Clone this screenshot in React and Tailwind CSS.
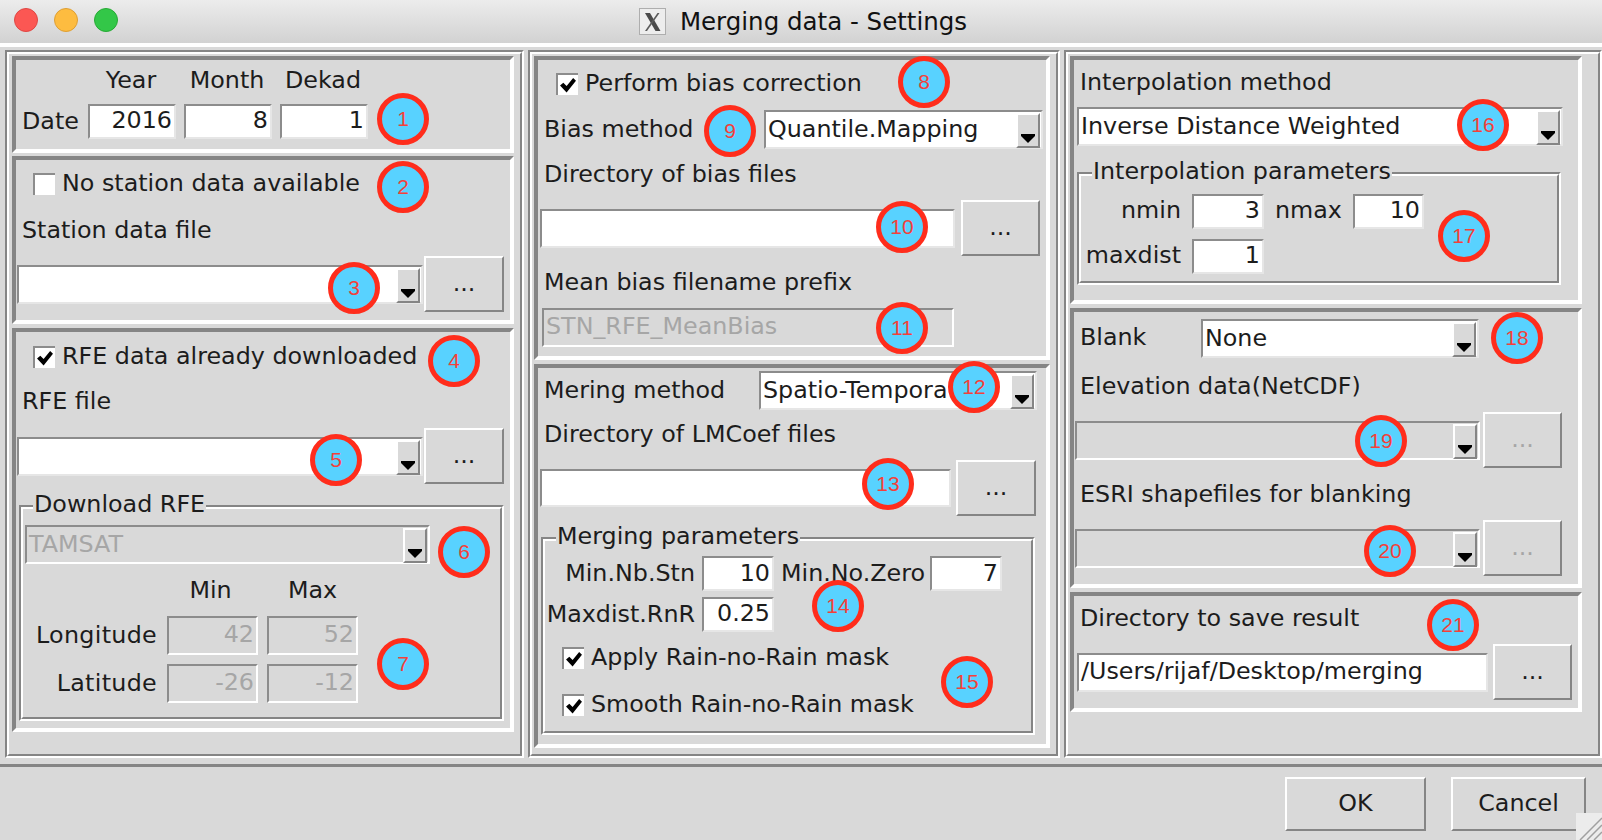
import React from 'react';

const sunken = 'border-t-[#858585] border-l-[#858585] border-r-white border-b-white';
const raised = 'border-t-white border-l-white border-r-[#858585] border-b-[#858585]';

const badges = [
  [1, 403, 119], [2, 403, 187], [3, 354, 288], [4, 454, 361], [5, 336, 460], [6, 464, 552], [7, 403, 664],
  [8, 924, 82], [9, 730, 131], [10, 902, 227], [11, 902, 328], [12, 974, 387], [13, 888, 484], [14, 838, 606],
  [15, 967, 682], [16, 1483, 125], [17, 1464, 236], [18, 1517, 338], [19, 1381, 441], [20, 1390, 551], [21, 1453, 625],
];

const Label = ({ className = '', children }) => (
  <div className={`h-[30px] leading-[32px] whitespace-nowrap shrink-0 ${className}`}>{children}</div>
);

const Entry = ({ w, h = 35, value, disabled, left, className = '' }) => (
  <div
    style={{ width: w, height: h }}
    className={`shrink-0 border-2 border-t-[#8c8c8c] border-l-[#8c8c8c] flex items-center px-[2px] pb-[1px] whitespace-nowrap overflow-hidden ${left ? 'justify-start' : 'justify-end'} ${disabled ? 'bg-[#d9d9d9] text-[#a6a6a6] border-r-white border-b-white' : 'bg-white border-r-[#e6e6e6] border-b-[#e6e6e6]'} ${className}`}
  >
    {value}
  </div>
);

const Arrow = () => (
  <svg width="14" height="9" viewBox="0 0 14 9">
    <path d="M0 0H14V2L7 9L0 2Z" fill="#000" />
  </svg>
);

const Combo = ({ w, value, disabled, className = '' }) => (
  <div
    style={{ width: w }}
    className={`h-[39px] shrink-0 border-2 border-t-[#8c8c8c] border-l-[#8c8c8c] flex ${disabled ? 'bg-[#d9d9d9] border-r-white border-b-white text-[#a6a6a6]' : 'bg-white border-r-[#e6e6e6] border-b-[#e6e6e6]'} ${className}`}
  >
    <div className="flex-1 px-[2px] leading-[35px] whitespace-nowrap overflow-hidden">{value}</div>
    <div className={`w-[24px] h-[35px] mt-[1px] mr-[1px] border-2 bg-[#d9d9d9] flex items-end justify-center pb-[3px] ${raised}`}>
      <Arrow />
    </div>
  </div>
);

const Btn = ({ w = 80, h = 56, disabled, children, className = '' }) => (
  <div
    style={{ width: w, height: h }}
    className={`shrink-0 border-2 flex items-center justify-center ${raised} ${disabled ? 'text-[#a6a6a6]' : ''} ${className}`}
  >
    {children}
  </div>
);

const Check = ({ checked, label, className = '' }) => (
  <div className={`flex items-center gap-[7px] h-[22px] whitespace-nowrap ${className}`}>
    <div className="w-[22px] h-[22px] shrink-0 bg-white border-t-2 border-l-2 border-[#8c8c8c] flex items-center justify-center">
      {checked && (
        <svg width="16" height="15" viewBox="0 0 17 16">
          <path d="M0 8L3.5 5L7 8.5L14 0L17 3L7 15.5Z" fill="#000" />
        </svg>
      )}
    </div>
    <span className="-mt-[1px]">{label}</span>
  </div>
);

const Group = ({ h, className = '', children }) => (
  <div style={{ height: h }} className={`shrink-0 border-4 ${sunken} ${className}`}>
    {children}
  </div>
);

const Frame = ({ w, h, title, titleLeft = 12, className = '', children }) => (
  <div style={{ width: w, height: h }} className={`relative border-2 ${sunken} ${className}`}>
    <div className={`h-full border-2 ${raised}`}>{children}</div>
    <div style={{ left: titleLeft }} className="absolute -top-[18px] h-[30px] leading-[30px] px-[1px] bg-[#d9d9d9] whitespace-nowrap">
      {title}
    </div>
  </div>
);

const Column = ({ w, pl, children }) => (
  <div style={{ width: w }} className={`h-[708px] shrink-0 border-2 ${sunken}`}>
    <div style={{ paddingLeft: pl }} className={`h-full border-2 pt-[2px] flex flex-col ${raised}`}>
      {children}
    </div>
  </div>
);

const TitleIcon = () => (
  <svg width="27" height="27" viewBox="0 0 27 27">
    <rect x="0.5" y="0.5" width="26" height="26" fill="#ededed" stroke="#aeaeae" />
    <path d="M6 5H11L21.5 23H16.5Z" fill="#4a4a4a" />
    <path d="M18.5 5H20.5L8 23H6Z" fill="#5a5a5a" />
  </svg>
);

const App = () => (
  <div className="relative w-[1602px] h-[840px] overflow-hidden bg-[#d9d9d9] text-[#1c1c1c] text-[23.8px] font-['DejaVu_Sans',sans-serif]">
    {/* title bar */}
    <div className="relative h-[43px] bg-gradient-to-b from-[#ececec] to-[#d2d2d2] flex items-center justify-center">
      <div className="absolute left-[14px] top-[8px] flex gap-[16px]">
        <div className="w-[24px] h-[24px] rounded-full bg-[#fc5753] border border-[#df4744]" />
        <div className="w-[24px] h-[24px] rounded-full bg-[#fdbc40] border border-[#de9f34]" />
        <div className="w-[24px] h-[24px] rounded-full bg-[#33c748] border border-[#27aa35]" />
      </div>
      <div className="ml-[4px] flex items-center gap-[14px] text-[24.5px] text-[#111]">
        <TitleIcon />
        <span className="mt-[1px]">Merging data - Settings</span>
      </div>
    </div>

    {/* main area */}
    <div className="h-[724px] border-t-4 border-t-white border-b-[3px] border-b-[#858585] pt-[3px] pl-[5px] flex gap-[4px]">
      <Column w={519} pl={3}>
        <Group h={97} className="w-[502px]">
          <div className="pt-[4px] grid grid-cols-[64px_88px_88px_88px] gap-x-2 gap-y-[10px]">
            <div />
            <Label className="text-center -ml-[2px]">Year</Label>
            <Label className="text-center -ml-[2px]">Month</Label>
            <Label className="text-center -ml-[2px]">Dekad</Label>
            <div className="pl-[6px] leading-[34px] whitespace-nowrap">Date</div>
            <Entry w={88} value="2016" />
            <Entry w={88} value="8" />
            <Entry w={88} value="1" />
          </div>
        </Group>
        <Group h={168} className="w-[502px] mt-[3px]">
          <Check label="No station data available" className="mt-[13px] ml-[17px]" />
          <Label className="mt-[19px] ml-[6px]">Station data file</Label>
          <div className="mt-[12px] ml-[1px] flex items-center gap-[1px]">
            <Combo w={406} />
            <Btn>...</Btn>
          </div>
        </Group>
        <Group h={404} className="w-[502px] mt-[4px]">
          <Check checked label="RFE data already downloaded" className="mt-[14px] ml-[17px]" />
          <Label className="mt-[17px] ml-[6px]">RFE file</Label>
          <div className="mt-[13px] ml-[1px] flex items-center gap-[1px]">
            <Combo w={406} />
            <Btn>...</Btn>
          </div>
          <Frame w={485} h={216} title="Download RFE" titleLeft={12} className="mt-[21px] ml-[3px]">
            <Combo w={405} value="TAMSAT" disabled className="mt-[16px] ml-[2px]" />
            <div className="mt-[10px] flex">
              <div className="w-[142px]" />
              <Label className="w-[91px] text-center">Min</Label>
              <Label className="w-[91px] ml-[11px] text-center">Max</Label>
            </div>
            <div className="mt-[12px] flex items-center">
              <div className="w-[134px] text-right mr-[10px] tracking-[0.3px]">Longitude</div>
              <Entry w={91} h={39} value="42" disabled />
              <Entry w={91} h={39} value="52" disabled className="ml-[9px]" />
            </div>
            <div className="mt-[9px] flex items-center">
              <div className="w-[134px] text-right mr-[10px] tracking-[0.3px]">Latitude</div>
              <Entry w={91} h={39} value="-26" disabled />
              <Entry w={91} h={39} value="-12" disabled className="ml-[9px]" />
            </div>
          </Frame>
        </Group>
      </Column>

      <Column w={532} pl={2}>
        <Group h={304} className="w-[516px]">
          <Check checked label="Perform bias correction" className="mt-[13px] ml-[18px]" />
          <div className="mt-[15px] ml-[6px] flex items-center">
            <div className="w-[220px] whitespace-nowrap">Bias method</div>
            <Combo w={279} value="Quantile.Mapping" />
          </div>
          <Label className="mt-[9px] ml-[6px]">Directory of bias files</Label>
          <div className="mt-[12px] ml-[2px] flex items-center gap-[6px]">
            <Entry w={415} h={39} />
            <Btn w={79}>...</Btn>
          </div>
          <Label className="mt-[10px] ml-[6px]">Mean bias filename prefix</Label>
          <Entry w={412} h={39} value="STN_RFE_MeanBias" disabled left className="mt-[12px] ml-[4px]" />
        </Group>
        <Group h={384} className="w-[516px] mt-[4px]">
          <div className="mt-[3px] ml-[6px] flex items-center">
            <div className="w-[215px] whitespace-nowrap">Mering method</div>
            <Combo w={278} value="Spatio-Tempora" />
          </div>
          <Label className="mt-[8px] ml-[6px]">Directory of LMCoef files</Label>
          <div className="mt-[12px] ml-[2px] flex items-center gap-[5px]">
            <Entry w={411} h={38} />
            <Btn>...</Btn>
          </div>
          <Frame w={494} h={198} title="Merging parameters" titleLeft={13} className="mt-[21px] ml-[3px]">
            <div className="mt-[15px] flex items-center">
              <div className="w-[150px] text-right mr-[7px] whitespace-nowrap">Min.Nb.Stn</div>
              <Entry w={72} value="10" />
              <div className="w-[144px] ml-[7px] mr-[5px] whitespace-nowrap">Min.No.Zero</div>
              <Entry w={72} value="7" />
            </div>
            <div className="mt-[5px] flex items-center">
              <div className="w-[150px] text-right mr-[7px] whitespace-nowrap">Maxdist.RnR</div>
              <Entry w={72} value="0.25" />
            </div>
            <Check checked label="Apply Rain-no-Rain mask" className="mt-[15px] ml-[17px]" />
            <Check checked label="Smooth Rain-no-Rain mask" className="mt-[25px] ml-[17px]" />
          </Frame>
        </Group>
      </Column>

      <Column w={538} pl={2}>
        <Group h={248} className="w-[512px]">
          <Label className="mt-[6px] ml-[6px]">Interpolation method</Label>
          <Combo w={486} value="Inverse Distance Weighted" className="mt-[11px] ml-[3px]" />
          <Frame w={484} h={113} title="Interpolation parameters" titleLeft={13} className="mt-[26px] ml-[3px]">
            <div className="mt-[18px] flex items-center">
              <div className="w-[100px] text-right mr-[11px] -mt-[1px]">nmin</div>
              <Entry w={72} value="3" />
              <div className="w-[67px] mx-[11px] -mt-[1px]">nmax</div>
              <Entry w={71} value="10" />
            </div>
            <div className="mt-[10px] flex items-center">
              <div className="w-[100px] text-right mr-[11px] -mt-[2px]">maxdist</div>
              <Entry w={72} value="1" />
            </div>
          </Frame>
        </Group>
        <Group h={280} className="w-[512px] mt-[4px]">
          <div className="mt-[7px] ml-[6px] flex items-center">
            <div className="w-[121px] -mt-[1px]">Blank</div>
            <Combo w={278} value="None" />
          </div>
          <Label className="mt-[12px] ml-[6px]">Elevation data(NetCDF)</Label>
          <div className="mt-[12px] ml-[1px] flex items-center gap-[3px]">
            <Combo w={405} disabled />
            <Btn w={79} disabled>...</Btn>
          </div>
          <Label className="mt-[10px] ml-[6px]">ESRI shapefiles for blanking</Label>
          <div className="mt-[12px] ml-[1px] flex items-center gap-[3px]">
            <Combo w={405} disabled />
            <Btn w={79} disabled>...</Btn>
          </div>
        </Group>
        <Group h={120} className="w-[512px] mt-[4px]">
          <Label className="mt-[6px] ml-[6px]">Directory to save result</Label>
          <div className="mt-[12px] ml-[3px] flex items-center gap-[5px]">
            <Entry w={411} h={39} value="/Users/rijaf/Desktop/merging" left />
            <Btn w={79}>...</Btn>
          </div>
        </Group>
      </Column>
    </div>

    {/* footer */}
    <div className="pt-[10px] pr-[16px] flex justify-end gap-[25px]">
      <Btn w={141} h={54}>OK</Btn>
      <Btn w={135} h={54}>Cancel</Btn>
    </div>
    <svg className="absolute right-0 bottom-0" width="26" height="27" viewBox="0 0 26 27">
      <rect width="26" height="27" fill="#ececec" />
      <path d="M4 27L26 5M11 27L26 12M18 27L26 19" stroke="#a0a0a0" strokeWidth="1.5" />
    </svg>

    {/* numbered callouts */}
    {badges.map(([n, x, y]) => (
      <div
        key={n}
        style={{ left: x - 26, top: y - 26 }}
        className="absolute w-[52px] h-[52px] rounded-full border-[5px] border-[#ff2d1c] bg-[#58d2ff] text-[#f4403a] text-[21px] font-['Liberation_Sans',sans-serif] flex items-center justify-center"
      >
        {n}
      </div>
    ))}
  </div>
);

export default App;
